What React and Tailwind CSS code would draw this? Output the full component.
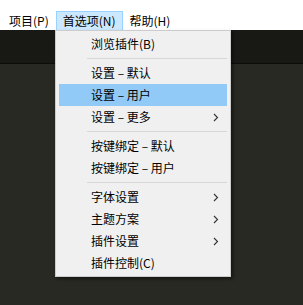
import React from "react"

const font = { fontFamily: '"Noto Sans CJK SC", "Microsoft YaHei", sans-serif' }

function Chevron() {
  return (
    <svg width="6" height="9" viewBox="0 0 6 9" className="absolute right-[8px] top-[7px]">
      <path d="M1 1 L4.5 4.5 L1 8" fill="none" stroke="#333" strokeWidth="1.1" />
    </svg>
  )
}

function Item({ label, active, sub }) {
  return (
    <div className={`relative h-[22px] mx-[3px] pl-[32px] flex items-center text-[12px] text-black ${active ? "bg-[#91c9f7]" : ""}`}>
      {label}
      {sub && <Chevron />}
    </div>
  )
}

function Sep() {
  return (
    <div className="h-[7px] flex items-center pl-[31px] pr-[3px]">
      <div className="h-px w-full bg-[#d7d7d7]" />
    </div>
  )
}

export default function App() {
  return (
    <div className="relative w-[303px] h-[305px] overflow-hidden bg-[#282923]" style={font}>
      <div className="h-[30px] bg-white flex items-end pl-[2px] text-[12px] text-black">
        <div className="h-[19px] px-[7px] flex items-center">项目(P)</div>
        <div className="h-[19px] px-[6px] flex items-center bg-[#cce8ff] border border-b-0 border-[#99d1ff]">首选项(N)</div>
        <div className="h-[19px] px-[7px] flex items-center">帮助(H)</div>
      </div>
      <div className="h-[34px] bg-[#181915] border-b border-[#0c0c0a]" />

      <div className="absolute left-[55px] top-[30px] w-[176px] bg-[#f0f0f0] border border-[#cccccc] py-[2px] shadow-[2px_2px_3px_rgba(0,0,0,0.45)]">
        <Item label="浏览插件(B)" />
        <Sep />
        <Item label="设置 – 默认" />
        <Item label="设置 – 用户" active />
        <Item label="设置 – 更多" sub />
        <Sep />
        <Item label="按键绑定 – 默认" />
        <Item label="按键绑定 – 用户" />
        <Sep />
        <Item label="字体设置" sub />
        <Item label="主题方案" sub />
        <Item label="插件设置" sub />
        <Item label="插件控制(C)" />
      </div>
    </div>
  )
}
